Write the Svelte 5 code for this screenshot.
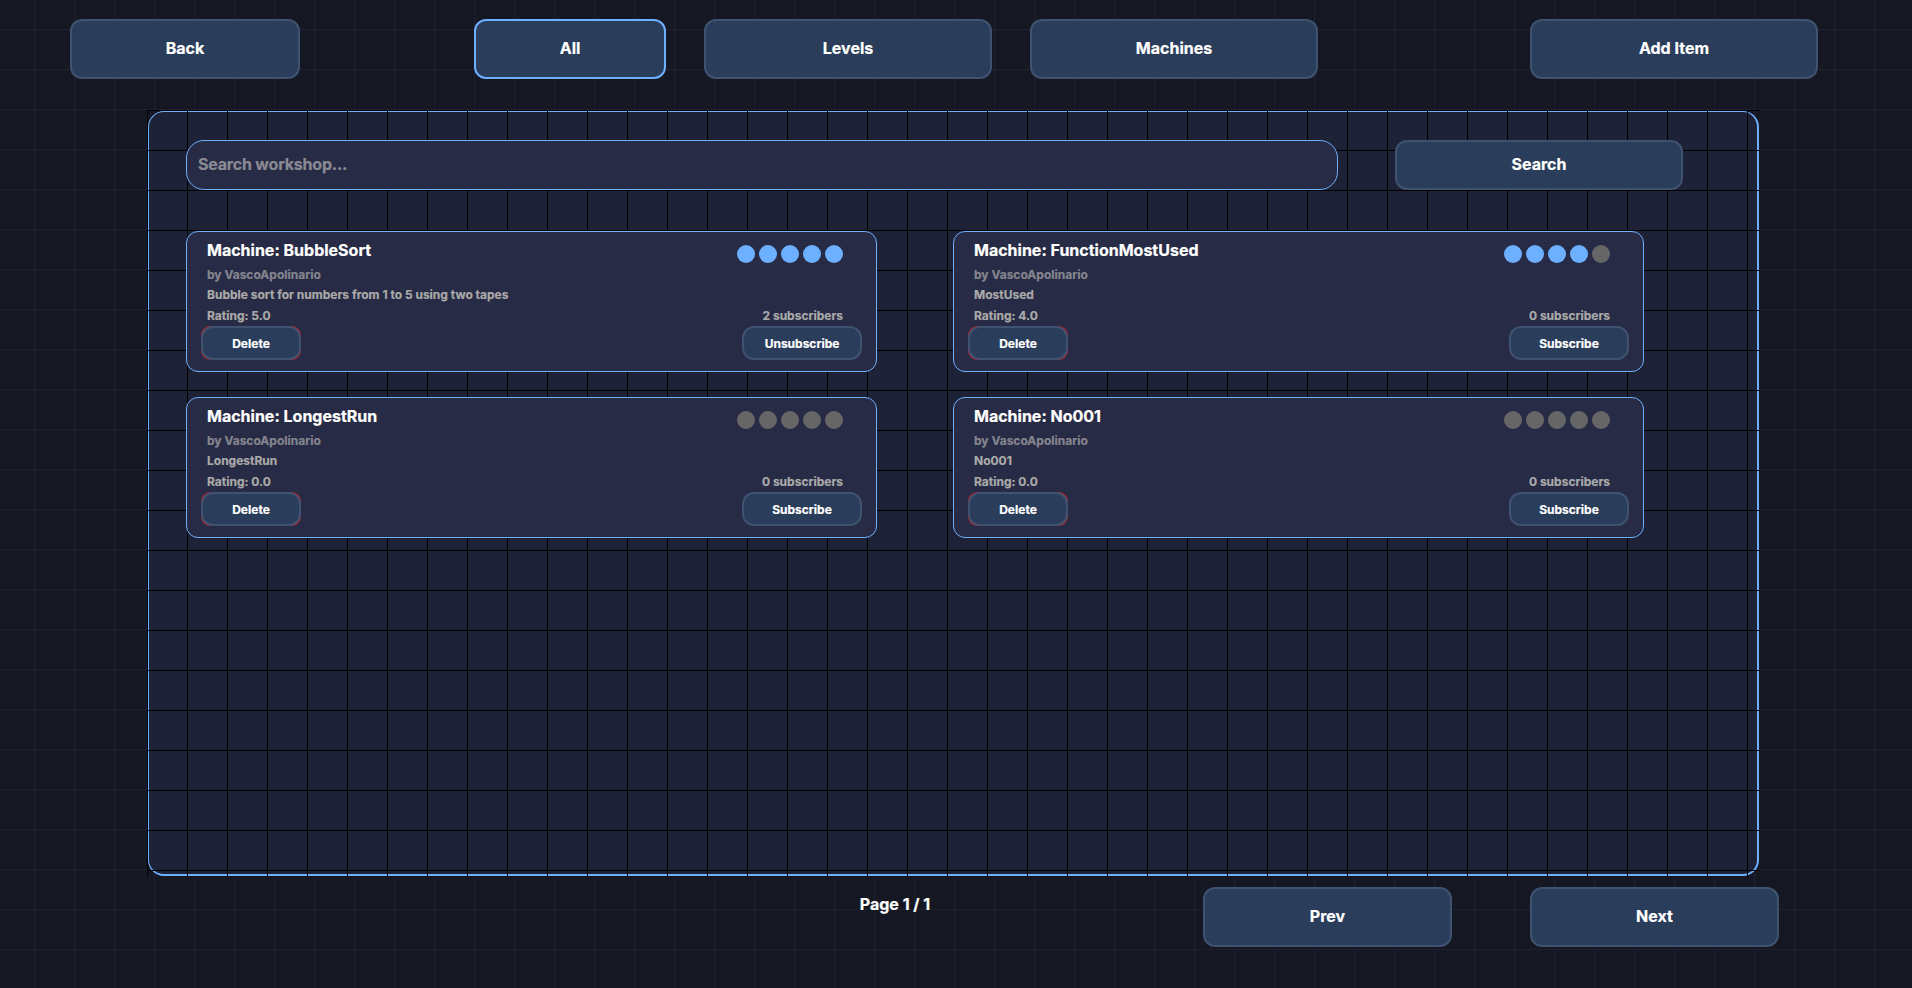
<script>
  const cards = [
    { name: 'BubbleSort', desc: 'Bubble sort for numbers from 1 to 5 using two tapes', rating: 5, subs: 2, action: 'Unsubscribe' },
    { name: 'FunctionMostUsed', desc: 'MostUsed', rating: 4, subs: 0, action: 'Subscribe' },
    { name: 'LongestRun', desc: 'LongestRun', rating: 0, subs: 0, action: 'Subscribe' },
    { name: 'No001', desc: 'No001', rating: 0, subs: 0, action: 'Subscribe' }
  ];
  const stars = [1, 2, 3, 4, 5];
</script>

<div class="page">
  <nav class="top">
    <button class="btn back">Back</button>
    <button class="btn all active">All</button>
    <button class="btn wide levels">Levels</button>
    <button class="btn wide machines">Machines</button>
    <button class="btn wide add">Add Item</button>
  </nav>

  <main class="panel">
    <div class="search">
      <input class="input" type="text" placeholder="Search workshop..." />
      <button class="btn search-btn">Search</button>
    </div>
    <div class="grid">
      {#each cards as c}
        <article class="card">
          <div class="left">
            <h3>Machine: {c.name}</h3>
            <p class="by">by VascoApolinario</p>
            <p class="info">{c.desc}</p>
            <p class="info rating">Rating: {c.rating}.0</p>
            <span class="danger"><button class="small del">Delete</button></span>
          </div>
          <div class="right">
            <div class="dots">
              {#each stars as s}
                <span class="dot" class:on={s <= c.rating}></span>
              {/each}
            </div>
            <p class="info subs">{c.subs} subscribers</p>
            <button class="small act">{c.action}</button>
          </div>
        </article>
      {/each}
    </div>
  </main>

  <footer class="bottom">
    <span class="pageno">Page 1 / 1</span>
    <button class="btn pager">Prev</button>
    <button class="btn pager next">Next</button>
  </footer>
</div>

<style>
  :global(body) {
    margin: 0;
    background-color: #151722;
    background-image:
      linear-gradient(#1f2132 1px, transparent 1px),
      linear-gradient(90deg, #1f2132 1px, transparent 1px);
    background-size: 40px 40px;
    background-position: 34px 29px;
  }
  .page {
    width: 1912px;
    height: 988px;
    overflow: hidden;
    font-family: Inter, "Liberation Sans", sans-serif;
    font-weight: 700;
    font-feature-settings: "calt" 0;
    -webkit-text-stroke: 0.2px currentColor;
    color: #fff;
  }
  .top {
    display: flex;
    padding: 19px 0 0 70px;
    height: 60px;
  }
  .btn {
    box-sizing: border-box;
    height: 60px;
    background: #2a3d5a;
    border: 2px solid #3f5270;
    border-radius: 12px;
    color: #fff;
    font: 700 16px Inter, "Liberation Sans", sans-serif;
    font-feature-settings: "calt" 0;
    -webkit-text-stroke: 0.2px currentColor;
    padding: 0 0 2px;
  }
  .back { width: 230px; }
  .all { width: 192px; margin-left: 174px; }
  .active { border-color: #6cb0ff; }
  .wide { width: 288px; }
  .levels { margin-left: 38px; }
  .machines { margin-left: 38px; }
  .add { margin-left: 212px; }

  .panel {
    position: relative;
    box-sizing: border-box;
    width: 1611px;
    height: 765px;
    margin: 32px 0 0 148px;
    background: #1e2236;
    border: solid #6cb0ff;
    border-width: 1px 2px 2px 1px;
    border-radius: 16px;
    padding: 28px 37px 0;
  }
  .panel::before {
    content: "";
    position: absolute;
    inset: -2px -3px -3px -2px;
    background-image:
      linear-gradient(#000 1px, transparent 1px),
      linear-gradient(90deg, #000 1px, transparent 1px);
    background-size: 40px 40px;
    pointer-events: none;
  }
  .search, .grid { position: relative; }
  .search {
    display: flex;
    gap: 57px;
    height: 50px;
  }
  .input {
    box-sizing: border-box;
    width: 1152px;
    height: 50px;
    background: #282b45;
    border: 1px solid #6cb0ff;
    border-radius: 18px;
    padding: 0 11px 2px;
    color: #fff;
    font: 700 16px Inter, "Liberation Sans", sans-serif;
    font-feature-settings: "calt" 0;
    letter-spacing: -0.2px;
    -webkit-text-stroke: 0.2px currentColor;
    outline: none;
  }
  .input::placeholder { color: #8a8a94; opacity: 1; }
  .search-btn { width: 288px; height: 50px; }

  .grid {
    display: grid;
    grid-template-columns: 691px 691px;
    column-gap: 76px;
    row-gap: 25px;
    margin-top: 41px;
    width: 1458px;
  }
  .card {
    box-sizing: border-box;
    height: 141px;
    display: flex;
    justify-content: space-between;
    background: #282b45;
    border: 1px solid #6cb0ff;
    border-radius: 12px;
    padding: 8px 14px 10px 14px;
  }
  .left, .right { display: flex; flex-direction: column; }
  .right { align-items: flex-end; }
  h3 {
    margin: 0 0 0 6px;
    font-size: 16px;
    line-height: 20px;
    font-weight: 700;
  }
  p { margin: 0; font-size: 12px; line-height: 20px; }
  .by { margin: 5px 0 0 6px; color: #85858f; }
  .info { margin-left: 6px; color: #aaaaaa; }
  .left .info { height: 20px; }
  .left .rating { padding-top: 1px; }
  .danger {
    display: block;
    width: 100px;
    height: 34px;
    border-radius: 9px;
    background: #a8242e;
  }
  .small {
    display: block;
    box-sizing: border-box;
    height: 34px;
    padding: 0;
    background: #2a3d5a;
    border: 2px solid #3f5270;
    border-radius: 12px;
    color: #fff;
    font: 700 12px Inter, "Liberation Sans", sans-serif;
    font-feature-settings: "calt" 0;
    -webkit-text-stroke: 0.2px currentColor;
  }
  .del { width: 100px; }
  .act { width: 120px; }
  .dots {
    display: flex;
    gap: 4px;
    margin: 5px 19px 0 0;
    height: 18px;
  }
  .dot {
    width: 18px;
    height: 18px;
    border-radius: 50%;
    background: #666;
  }
  .dot.on { background: #6cb0ff; }
  .subs { margin: 43px 19px 0 0; line-height: 20px; }

  .bottom {
    display: flex;
    margin-top: 11px;
  }
  .pageno {
    box-sizing: border-box;
    width: 200px;
    margin: 7px 0 0 795px;
    text-align: center;
    font-size: 16px;
    line-height: 20px;
  }
  .pager { width: 249px; margin-left: 208px; }
  .next { margin-left: 78px; }
</style>
